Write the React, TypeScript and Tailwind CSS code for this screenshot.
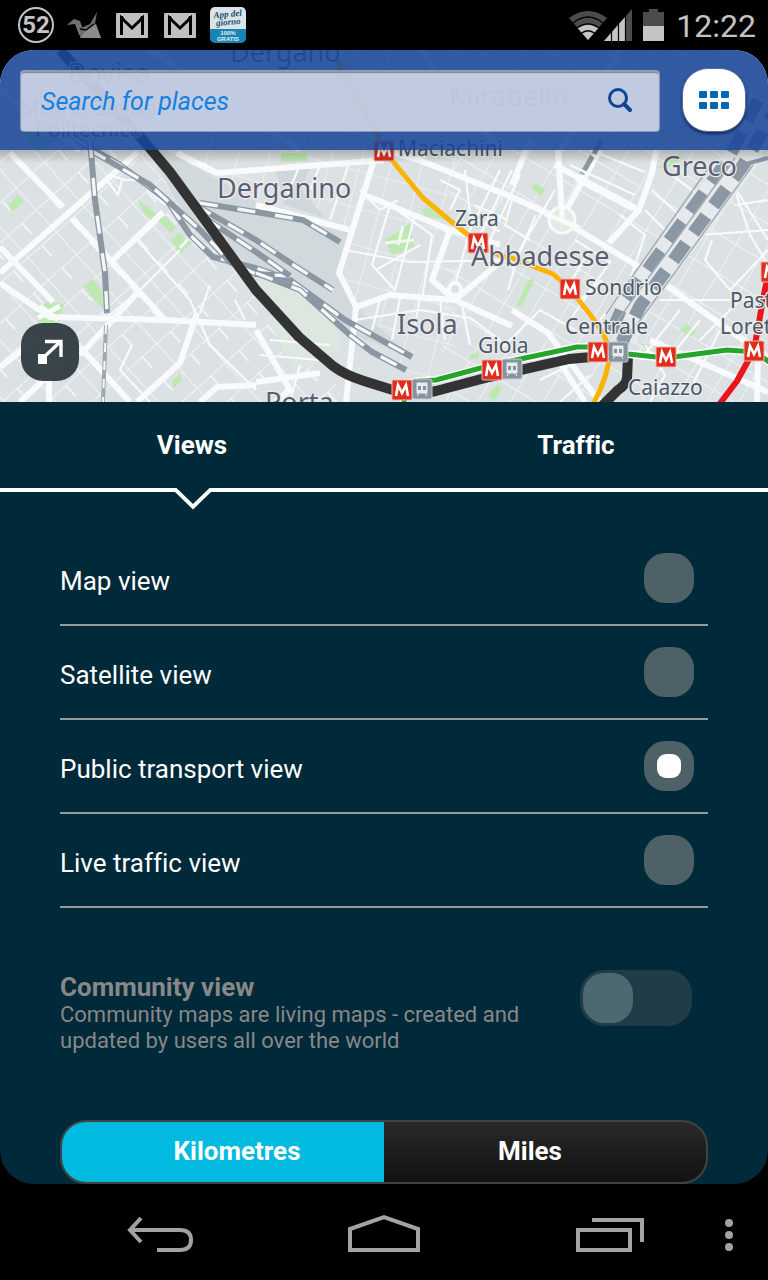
import React, { useState } from 'react';

const majorRoads = [
  'M0 273 L137 153', 'M10 153 L63 207', 'M72 218 L165 320', 'M0 283 L50 317 L165 320 L256 325',
  'M0 367 L35 340 M20 402 L60 365', 'M80 347 L130 402', 'M197 313 L180 363 L137 402', 'M163 212 L110 263',
  'M200 402 L217 387 L256 385', 'M177 153 L217 173 L256 170 L384 160', 'M0 247 L53 302',
  'M373 163 L339 273 L356 307 L346 402', 'M362 194 L448 229 L500 245', 'M384 150 L419 160 L512 197 L562 220 L649 273 L719 323 L768 357',
  'M256 205 L350 230', 'M356 307 L390 295 L455 300 L500 262', 'M455 300 L512 326', 'M450 230 L432 280 L455 300',
  'M555 165 L639 210 L652 173 L656 150', 'M639 210 L609 243', 'M558 150 L562 215', 'M565 212 L600 150',
  'M256 382 L320 373', 'M512 310 L548 333 L600 402', 'M530 140 L512 185', 'M80 355 L108 325 L137 293',
  'M49 370 L49 402', 'M552 350 L585 402', 'M650 340 L768 392', 'M758 355 L757 402', 'M256 330 L290 390 L275 402',
  'M0 90 L80 150', 'M150 50 L300 150', 'M420 50 L500 150', 'M620 50 L560 150',
];
const mediumRoads = [
  'M107 317 L137 293 L180 250', 'M110 175 L125 180 L137 180 L165 205', 'M122 180 L118 195 L107 180', 'M137 240 L190 300 L210 345 L256 390',
  'M200 313 L210 285', 'M235 300 L245 320', 'M132 345 L120 370 L150 402', 'M345 250 L372 255 L410 262 L512 260', 'M372 265 L395 290 L415 215',
  'M376 270 L420 245 M372 265 L390 205', 'M390 205 L432 235 L422 300', 'M360 190 L380 210 L398 200', 'M355 320 L420 310 L470 318 L500 340',
  'M380 300 L372 330 M400 298 L392 340 M420 298 L415 325', 'M440 300 L445 340 M462 305 L470 345', 'M465 170 L470 215 L500 232',
  'M440 180 L460 190 L450 210', 'M500 170 L470 230 L455 285', 'M512 170 L480 235', 'M520 175 L490 240', 'M475 205 L508 220 M482 185 L520 202',
  'M555 190 L520 250 L508 290', 'M536 215 L512 270', 'M575 240 L610 262 L570 320', 'M590 250 L560 300', 'M620 215 L645 235 L630 280',
  'M652 190 L690 225 M645 210 L680 245', 'M665 170 L712 205', 'M700 235 L768 230 M712 240 L705 260 L730 290 L768 250',
  'M735 190 L750 235 L768 265', 'M735 205 L768 200 M730 180 L768 240', 'M660 300 L768 300', 'M680 310 L640 360 M700 320 L660 370 M720 330 L690 390',
  'M645 345 L665 375 L650 402', 'M625 290 L600 320 M602 280 L580 300', 'M500 350 L540 310 L575 330', 'M740 300 L700 340',
  'M570 165 L635 195 M575 180 L632 210 M590 150 L645 172', 'M300 165 L285 200 M320 165 L310 190 M350 160 L330 220',
  'M270 340 L330 345 M260 355 L320 360 M300 365 L290 402', 'M512 200 L505 225 L530 240', 'M540 380 L580 360 M560 402 L590 375',
];

const parks = [
  'M8 205 L18 195 L24 202 L12 212Z', 'M138 200 L147 206 L156 214 L154 222 L143 212Z', 'M158 220 L164 216 L176 227 L171 233Z',
  'M171 240 L179 233 L192 243 L180 254Z', 'M83 286 L93 279 L103 293 L103 309Z', 'M36 312 L46 302 L64 304 L60 322 L40 326Z',
  'M281 153 L307 153 L307 161 L281 162Z', 'M422 210 L427 207 L446 220 L425 216Z', 'M385 240 L410 223 L414 248 L392 255Z',
  'M531 187 L536 183 L546 190 L540 196Z', 'M549 213 L556 208 L560 214 L552 219Z', 'M568 208 L575 216 L570 218Z', 'M516 307 L528 280 L535 278 L522 306Z',
  'M680 330 L686 323 L696 332 L690 337Z', 'M172 382 L180 373 L182 381 L174 388Z', 'M470 355 L478 352 L478 358 L470 360Z',
  'M640 343 L650 345 L646 350Z', 'M488 395 L497 385 L502 388 L494 402Z', 'M656 168 L680 153 L684 158 L668 168Z', 'M20 130 L45 120 L60 140 L36 152Z',
];

const rails = [
  'M77 140 L120 165 L167 200 L190 235 L213 257 L256 268 L290 280 L345 320 L412 357',
  'M90 150 L150 185 L200 230 L230 262 L256 274 L290 276',
  'M256 273 L300 290 L350 335 L372 352 L406 370',
  'M200 203 L256 212 L303 220 L340 242',
  'M195 205 L256 240 L295 266 L333 290',
  'M205 218 L256 252 L290 276',
  'M90 140 L95 200 L105 273 L107 313',
];

type Label = [string, number, number, number];
const labels: Label[] = [
  ['Bovisa', 68, 83, 27], ['Dergano', 230, 62, 27], ['Mirabello', 449, 106, 27],
  ['Milano Bovisa', 20, 116, 21], ['Politecnico', 35, 137, 21], ['Maciachini', 398, 156, 21], ['Derganino', 217, 198, 27],
  ['Greco', 662, 176, 27], ['Zara', 455, 226, 21], ['Abbadesse', 471, 266, 27], ['Isola', 397, 334, 27],
  ['Sondrio', 585, 295, 21], ['Centrale', 565, 334, 21], ['Gioia', 478, 353, 21],
  ['Past', 730, 308, 21], ['Loreto', 720, 334, 21], ['Caiazzo', 628, 395, 21], ['Porta', 265, 412, 27],
];

const metros = [[384, 151], [478, 243], [570, 289], [598, 352], [666, 357], [754, 351], [771, 272], [492, 370], [402, 390]];
const stations = [[422, 389], [512, 369], [618, 352]];

function CityMap() {
  return (
    <svg aria-label="Milan transit map" role="img" viewBox="0 50 768 352" preserveAspectRatio="xMidYMid slice" className="absolute inset-0 h-full w-full">
      <defs>
        <pattern id="blocksWest" width="38" height="30" patternUnits="userSpaceOnUse" patternTransform="rotate(-42)">
          <path d="M0 0H38M0 0V30M19 0V15" stroke="#f1f4f5" strokeWidth="2" fill="none" />
        </pattern>
        <pattern id="blocksMid" width="30" height="36" patternUnits="userSpaceOnUse" patternTransform="rotate(15)">
          <path d="M0 0H30M0 0V36" stroke="#f1f4f5" strokeWidth="1.6" fill="none" />
        </pattern>
        <pattern id="blocksEast" width="28" height="34" patternUnits="userSpaceOnUse" patternTransform="rotate(31)">
          <path d="M0 0H28M0 0V34" stroke="#f1f4f5" strokeWidth="1.8" fill="none" />
        </pattern>
        <linearGradient id="edgeShade" x1="0" x2="0" y1="0" y2="1">
          <stop offset="0" stopColor="#000" stopOpacity="0.22" />
          <stop offset="1" stopColor="#000" stopOpacity="0" />
        </linearGradient>
      </defs>
      <rect y="50" width="768" height="352" fill="#dce1e4" />
      <path d="M0 50H90L150 165L256 290L350 402H0Z" fill="url(#blocksWest)" />
      <path d="M230 50H460L455 402H430L345 310L340 240L190 165Z" fill="url(#blocksMid)" />
      <path d="M455 50H768V402H440Z" fill="url(#blocksEast)" />
      <path d="M140 135 L200 170 L262 205 L352 230 L340 272 L356 306 L412 357 L340 330 L260 270 L190 225Z" fill="#d2d9dc" />
      <path d="M275 168 L310 165 L302 190 L325 218 L285 205Z" fill="#d0d7da" />
      <path d="M256 280 Q290 276 315 296 Q338 320 341 348 L296 370Z" fill="#dce8df" />
      <path d="M262 312 L296 370 L325 362 L300 337Z" fill="#dce8df" />
      <g fill="#bde8b2">
        {parks.map((d) => <path key={d} d={d} />)}
      </g>
      <g fill="none" stroke="#f8fafb" strokeLinejoin="round">
        {mediumRoads.map((d) => <path key={d} d={d} strokeWidth="2.2" />)}
        {majorRoads.map((d) => <path key={d} d={d} strokeWidth="6" />)}
        <circle cx="562" cy="220" r="13" strokeWidth="3" fill="#e3ebe3" />
        <path d="M545 214 L580 228 M562 205 V222" strokeWidth="5" />
        <circle cx="455" cy="289" r="6" strokeWidth="4" />
      </g>
      <path d="M403 226 L398 245 M385 243 L414 240 M180 248 L188 239" stroke="#f2f7f1" strokeWidth="3" />
      <path d="M40 306 L58 320 M38 318 L60 306" stroke="#f8fafb" strokeWidth="5" />
      <g fill="none">
        {rails.map((d) => (
          <g key={d}>
            <path d={d} stroke="#8b98a4" strokeWidth="6" />
            <path d={d} stroke="#f5f7f8" strokeWidth="3.4" strokeDasharray="18 20" />
          </g>
        ))}
        <path d="M106 325 L103 402" stroke="#9ea8b1" strokeWidth="4" />
        <path d="M106 325 L103 402" stroke="#f5f7f8" strokeWidth="2" strokeDasharray="9 9" />
        <path d="M602 140 L582 174" stroke="#8b98a4" strokeWidth="5" strokeDasharray="16 3" />
        <path d="M768 100 L742 158 L638 296 L620 338" stroke="#e6eaec" strokeWidth="34" />
        <path d="M758 100 L729 158 L625 300 L610 335" stroke="#8b98a4" strokeWidth="12" strokeDasharray="23 13" />
        <path d="M772 115 L744 164 L640 306 L622 342" stroke="#8b98a4" strokeWidth="13" strokeDasharray="21 13" strokeDashoffset="15" />
        <path d="M714 160 L606 314 M735 158 L618 320 M753 165 L636 326" stroke="#a3adb5" strokeWidth="1.5" />
        <path d="M746 164 L768 158" stroke="#8b98a4" strokeWidth="4" />
        <path d="M617 350 L626 337" stroke="#8b98a4" strokeWidth="10" />
      </g>
      <g fill="none" strokeLinejoin="round">
        <path d="M60 50 L143 140 L170 172 L256 290 L299 337 L333 366 Q345 375 364 381 L396 391 Q418 395 436 391 L489 377 L512 372 L569 359 L603 356" stroke="#333" strokeWidth="10" />
        <path d="M628 357 L627 378 Q626 385 618 390 L602 406" stroke="#333" strokeWidth="10" />
        <path d="M337 60 L386 153 L423 198 L453 223 L478 243 Q500 258 512 258 L535 267 L553 274 L570 289 L592 317 Q606 335 610 352 Q608 378 592 406" stroke="#fcb300" strokeWidth="5" />
        <path d="M405 404 L400 385 L420 381 L436 380 L492 365 L577 347 L600 347 L628 354 L666 358 L727 350 L755 352 L772 364" stroke="#fff" strokeWidth="8" />
        <path d="M405 404 L400 385 L420 381 L436 380 L492 365 L577 347 L600 347 L628 354 L666 358 L727 350 L755 352 L772 364" stroke="#27a52b" strokeWidth="5" />
        <path d="M768 275 L764 294 L754 350 L737 381 L718 406" stroke="#e8151b" strokeWidth="6" />
      </g>
      {stations.map(([x, y]) => (
        <g key={x}>
          <rect x={x - 10} y={y - 10} width="20" height="20" rx="2" fill="#8793a0" stroke="#c6cdd3" />
          <path d={`M${x - 5} ${y - 6}h10v10h-10zM${x - 5} ${y + 7}l2-3M${x + 5} ${y + 7}l-2-3`} fill="#e8ebee" stroke="#e8ebee" />
          <path d={`M${x - 4} ${y - 3}h3v4h-3zM${x + 1} ${y - 3}h3v4h-3z`} fill="#8793a0" />
        </g>
      ))}
      {metros.map(([x, y]) => (
        <g key={x}>
          <rect x={x - 10} y={y - 10} width="20" height="20" rx="1" fill="#e02d1c" stroke="#f0b8b2" />
          <path d={`M${x - 6} ${y + 6} L${x - 4} ${y - 5} L${x} ${y + 3} L${x + 4} ${y - 5} L${x + 6} ${y + 6}`} fill="none" stroke="#fff" strokeWidth="2.6" />
        </g>
      ))}
      <g fontFamily="'Noto Sans', sans-serif" paintOrder="stroke" stroke="#e9edef" strokeWidth="2.5" strokeLinejoin="round">
        {labels.map(([text, x, y, size]) => (
          <text key={text} x={x} y={y} fontSize={size} fontWeight="400" fill={size === 27 ? '#5c5e70' : '#4d5764'}>{text}</text>
        ))}
      </g>
      <rect y="150" width="768" height="13" fill="url(#edgeShade)" />
    </svg>
  );
}

function Gmail() {
  return (
    <svg viewBox="0 0 32 25" className="block h-[25px] w-8" aria-hidden="true">
      <rect width="32" height="25" rx="1" fill="#c0c0c0" />
      <path d="M5.500 22 V5 L16 15 L26.500 5 V22" fill="none" stroke="#000" strokeWidth="3" />
      <path d="M4 3 H7 L9 8 H4Z M28 3 H25 L23 8 H28Z" fill="#000" />
    </svg>
  );
}

function StatusBar() {
  return (
    <div className="flex h-[50px] shrink-0 items-center justify-between pl-[18px] pr-3">
      <div className="flex items-center">
        <span className="flex size-9 items-center justify-center rounded-full border-2 border-[#c4c4c4] text-2xl font-bold leading-none text-[#c4c4c4]">52</span>
        <svg viewBox="0 0 35 27" className="ml-[13px] h-[27px] w-[35px]" aria-hidden="true">
          <path d="M0 13 L7 7 L13 9 L19 26 L12 23 L8 12Z" fill="#707070" />
          <path d="M14 16 L23 12 L30 0 L28 12 L34 26 L13 25Z" fill="#6b6b6b" />
          <path d="M13 26 L19 18 L29 12 L34 26Z" fill="#8b8b8b" />
          <path d="M13 17 L19 18 L27 12" fill="none" stroke="#000" strokeWidth="1.500" />
        </svg>
        <span className="ml-3.5"><Gmail /></span>
        <span className="ml-4"><Gmail /></span>
        <svg viewBox="0 0 36 36" className="ml-3.5 size-9" role="img" aria-label="App del giorno">
          <defs><clipPath id="badge"><rect width="36" height="36" rx="5" /></clipPath></defs>
          <g clipPath="url(#badge)" textAnchor="middle">
            <rect width="36" height="22" fill="#dbe3e6" />
            <rect y="22" width="36" height="14" fill="#1686b4" />
            <g transform="rotate(-5 18 12)" fill="#17506e" fontFamily="'Liberation Serif', serif" fontWeight="bold" fontStyle="italic" fontSize="9">
              <text x="18" y="10">App del</text>
              <text x="18" y="18">giorno</text>
            </g>
            <g fill="#e4eef2" fontFamily="'Liberation Sans', sans-serif" fontWeight="bold" fontSize="6">
              <text x="18" y="28">100%</text>
              <text x="18" y="34">GRATIS</text>
            </g>
          </g>
        </svg>
      </div>
      <div className="flex items-center">
        <svg viewBox="0 0 95 32" className="h-8 w-[95px]" aria-hidden="true">
          <path d="M0 9 Q19 -5 38 9 L19 31Z" fill="#4c4c4c" />
          <path d="M8.500 19 Q19 11 29.500 19 L19 31Z" fill="#c4c4c4" />
          <path d="M4 14 Q19 2 34 14 M8 19 Q19 11 30 19 M12 24.500 Q19 19 26 24.500" fill="none" stroke="#000" strokeWidth="1.300" />
          <path d="M35 32 L63 0 V32Z" fill="#4c4c4c" />
          <path d="M35 32 L56 8 V32Z" fill="#c4c4c4" />
          <path d="M42.500 12 V32 M49.500 10 V32 M56.500 6 V32" stroke="#000" strokeWidth="1.200" />
          <path d="M74 3 H80 V0 H89 V3 H95 V17 H74Z" fill="#4c4c4c" />
          <path d="M74 17 H95 V32 H74Z" fill="#c4c4c4" />
        </svg>
        <time className="ml-3 pt-0.5 text-[32px] leading-none text-[#c4c4c4]">12:22</time>
      </div>
    </div>
  );
}

function SearchHeader() {
  return (
    <header className="relative flex h-[100px] items-center gap-[22px] bg-[#184699]/87 pl-5 pr-[22px]">
      <div className="mt-0.5 flex h-[62px] min-w-0 flex-1 items-center rounded-[4px] border border-t-2 border-[#6e7a95]/60 bg-[#f1f2f5]/74 pr-[25px] shadow-[inset_0_1px_1px_rgba(60,60,60,0.5)]">
        <input type="search" aria-label="Search for places" placeholder="Search for places" className="h-full min-w-0 flex-1 bg-transparent pl-5 text-[25px] italic text-[#1480e0] outline-none placeholder:text-[#1480e0] placeholder:opacity-100" />
        <button type="button" aria-label="Search" className="pb-1">
          <svg viewBox="0 0 28 28" className="block size-7" fill="none" stroke="#0f4495">
            <circle cx="12" cy="12" r="8.500" strokeWidth="3" />
            <path d="M18 18 L24 24" strokeWidth="4" strokeLinecap="round" />
          </svg>
        </button>
      </div>
      <button type="button" aria-label="Menu" className="flex size-16 items-center justify-center rounded-[26px] border border-[#54709f] bg-white shadow-[0_2px_3px_rgba(0,10,50,0.6)]">
        <svg viewBox="0 0 30 18" className="h-[18px] w-[30px]" fill="#0068b0">
          {[0, 11, 22].map((x) => (
            <g key={x}>
              <rect x={x} y="0" width="8" height="7" rx="1" />
              <rect x={x} y="11" width="8" height="7" rx="1" />
            </g>
          ))}
        </svg>
      </button>
    </header>
  );
}

const views = ['Map view', 'Satellite view', 'Public transport view', 'Live traffic view'];

export default function App() {
  const [tab, setTab] = useState('Views');
  const [view, setView] = useState('Public transport view');
  const [unit, setUnit] = useState('Kilometres');

  return (
    <div className="flex min-h-screen flex-col bg-black font-[Roboto,sans-serif] text-white [font-variant-ligatures:none]">
      <StatusBar />
      <main className="flex grow flex-col overflow-hidden rounded-[34px] bg-[#002939]">
        <section className="relative h-[352px] overflow-hidden">
          <CityMap />
          <SearchHeader />
          <button type="button" aria-label="Expand map" className="absolute bottom-[21px] left-[21px] flex size-[58px] items-center justify-center rounded-[22px] bg-[#263238]/90">
            <svg viewBox="0 0 26 26" className="size-[26px]">
              <path d="M1 15 H10 V25 H1Z" fill="#fff" />
              <path d="M7 18 L23 3 M8 2.500 H24 V18" fill="none" stroke="#fff" strokeWidth="3.400" />
            </svg>
          </button>
        </section>

        <div role="tablist" className="grid grid-cols-2 border-b-4 border-white">
          {['Views', 'Traffic'].map((name) => (
            <button key={name} type="button" role="tab" aria-selected={tab === name} onClick={() => setTab(name)} className="relative flex h-[86px] items-center justify-center text-[26px] font-bold">
              {name}
              {tab === name && (
                <svg viewBox="0 0 36 22" className="absolute left-1/2 top-full h-[22px] w-9 -translate-x-[17px]" aria-hidden="true">
                  <path d="M1 0 H35 V5 L18 22 L1 5Z" fill="#002939" />
                  <path d="M0 0 H1.500 L18 16 L34.500 0 H36 V4 L18 21.500 L0 4Z" fill="#fff" />
                </svg>
              )}
            </button>
          ))}
        </div>

        <div className="px-[60px] pt-10">
          <fieldset>
            <legend className="sr-only">Map style</legend>
            {views.map((name) => (
              <label key={name} className="flex h-[94px] items-center justify-between border-b-2 border-[#999896] pr-3.5">
                <span className="pt-1.5 text-[26px] leading-8">{name}</span>
                <span className="grid place-items-center">
                  <input type="radio" name="view" checked={view === name} onChange={() => setView(name)} className="peer col-start-1 row-start-1 size-[50px] appearance-none rounded-[21px] bg-[#4d6167]" />
                  <span className="pointer-events-none col-start-1 row-start-1 hidden size-6 rounded-[9px] bg-white peer-checked:block" />
                </span>
              </label>
            ))}
          </fieldset>

          <div className="mt-[62px] flex items-start justify-between pr-4 text-[#888]">
            <label htmlFor="community" className="max-w-[480px] pt-0.5">
              <span className="block text-[26px] font-bold leading-[30px]">Community view</span>
              <span className="block text-[22px] leading-[26px]">Community maps are living maps - created and updated by users all over the world</span>
            </label>
            <input id="community" type="checkbox" role="switch" disabled className="h-14 w-28 shrink-0 appearance-none rounded-3xl bg-[#203c47] p-[3px] before:block before:size-[50px] before:rounded-[21px] before:bg-[#4e6872] before:content-['']" />
          </div>

          <div className="mt-[66px] grid h-16 grid-cols-2 overflow-hidden rounded-[26px] border-2 border-[#424242] bg-linear-to-b from-[#292929] to-[#121212]">
            {['Kilometres', 'Miles'].map((name) => (
              <button key={name} type="button" aria-pressed={unit === name} onClick={() => setUnit(name)} className={`pb-0.5 text-[26px] font-bold first:pl-7 last:pr-[30px] ${unit === name ? 'bg-[#00badf]' : ''}`}>{name}</button>
            ))}
          </div>
        </div>
      </main>

      <nav className="grid h-24 shrink-0 grid-cols-3 items-center px-12 pt-0.5">
        <button type="button" aria-label="Back" className="flex justify-center">
          <svg viewBox="0 0 68 40" className="h-10 w-[68px]" fill="none" stroke="#a3a3a3" strokeWidth="4">
            <path d="M15 5 L4 17 L15 29 M4 17 H54 Q65 17 65 27 Q65 37 54 37 H31" />
          </svg>
        </button>
        <button type="button" aria-label="Home" className="flex justify-center">
          <svg viewBox="0 0 72 40" className="h-10 w-[72px]" fill="none" stroke="#a3a3a3" strokeWidth="4">
            <path d="M2 37 V16 L36 4 L70 16 V37Z" />
          </svg>
        </button>
        <div className="flex items-center justify-between pl-[80px]">
          <button type="button" aria-label="Recent apps">
            <svg viewBox="0 0 68 40" className="block h-10 w-[68px]" fill="none" stroke="#a3a3a3" strokeWidth="4">
              <path d="M2 17 H54 V37 H2Z M16 7 H66 V29" />
            </svg>
          </button>
          <button type="button" aria-label="More options" className="-mr-[13px] pt-1">
            <svg viewBox="0 0 8 34" className="block h-[34px] w-2" fill="#a3a3a3">
              <circle cx="4" cy="5" r="4" />
              <circle cx="4" cy="17" r="4" />
              <circle cx="4" cy="29" r="4" />
            </svg>
          </button>
        </div>
      </nav>
    </div>
  );
}
